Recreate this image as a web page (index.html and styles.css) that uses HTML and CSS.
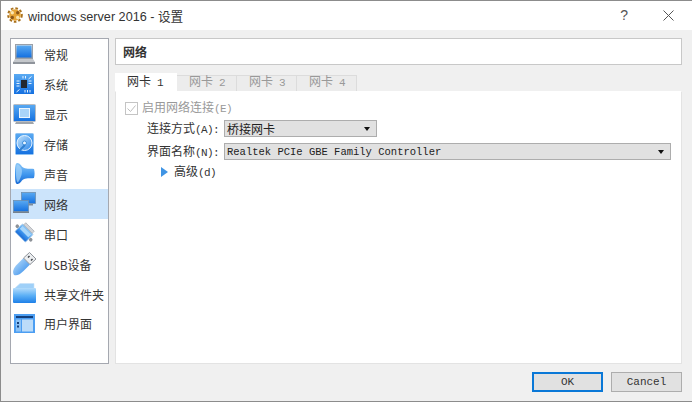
FILE: index.html
```html
<!DOCTYPE html>
<html lang="zh">
<head>
<meta charset="utf-8">
<title>windows server 2016 - 设置</title>
<link rel="stylesheet" href="styles.css">
</head>
<body>
<svg class="defs" width="0" height="0" aria-hidden="true">
  <defs>
    <linearGradient id="g" x1="0" y1="0" x2="0" y2="1"><stop offset="0" stop-color="#b4dcfb"/><stop offset=".5" stop-color="#5cb0f6"/><stop offset="1" stop-color="#1e80e8"/></linearGradient>
    <linearGradient id="d" x1="0" y1="0" x2="0" y2="1"><stop offset="0" stop-color="#5aaaf2"/><stop offset="1" stop-color="#1470e0"/></linearGradient>
    <linearGradient id="h" x1="0" y1="0" x2="1" y2="1"><stop offset="0" stop-color="#c4e4fc"/><stop offset="1" stop-color="#2a86ea"/></linearGradient>
    <linearGradient id="s" x1="0" y1="0" x2="0" y2="1"><stop offset="0" stop-color="#e4e6e8"/><stop offset="1" stop-color="#8f949a"/></linearGradient>
    <linearGradient id="c" x1="0" y1="0" x2="0" y2="1"><stop offset="0" stop-color="#8cc8f8"/><stop offset=".55" stop-color="#3f96ee"/><stop offset="1" stop-color="#1668d4"/></linearGradient>
  </defs>
</svg>
<div class="window">
  <header class="titlebar">
    <svg class="app-icon" width="16" height="16" viewBox="0 0 16 16"><circle cx="8" cy="8" r="6.800" fill="none" stroke="#a8701c" stroke-width="2" stroke-dasharray="2.600 2"/><circle cx="8" cy="8" r="5.800" fill="#e6a436"/><circle cx="5.300" cy="5.800" r="1.700" fill="#fbe6b0"/><circle cx="10.700" cy="5.800" r="1.700" fill="#8a5518"/><circle cx="10.700" cy="10.500" r="1.700" fill="#fbe6b0"/><circle cx="5.300" cy="10.500" r="1.700" fill="#8a5518"/></svg>
    <span class="title">windows server 2016 - 设置</span>
    <span class="help">?</span>
    <svg class="close" width="11" height="11" viewBox="0 0 11 11"><path d="M.5.5l10 10M10.500.5l-10 10" stroke="#555" stroke-width="1" fill="none"/></svg>
  </header>
  <div class="content">
    <div class="main">
      <nav class="sidebar">
        <div class="nav-item"><svg class="ico" viewBox="0 0 26 24"><rect x="3.500" y="1.500" width="17" height="14" fill="url(#s)" stroke="#9aa0a8"/><rect x="4.500" y="2.500" width="15" height="12" fill="url(#d)"/><path d="M3 16h18l2 3H1z" fill="#c4c7cb"/><rect x="1" y="19" width="22" height="2" fill="#8f949b"/></svg><span>常规</span></div>
        <div class="nav-item"><svg class="ico" viewBox="0 0 26 24"><rect x="2" y="1" width="20" height="20" fill="url(#d)"/><rect x="9" y="7" width="6" height="8" fill="#23272e"/><path d="M11 3v2.500M13.500 3v2.500M4.500 8h3M4.500 10.500h3M4.500 13h3M16.500 8h3M16.500 10.500h3M13 17v2.500M15.500 17v2.500M18 17v2.500M4.500 19l3-2.500M16.500 6l3-2.500" stroke="#e6f3ff" stroke-width="1" fill="none"/></svg><span>系统</span></div>
        <div class="nav-item"><svg class="ico" viewBox="0 0 26 24"><rect x="1.500" y="1.500" width="22" height="17" rx="1" fill="url(#d)" stroke="#b8bcc2"/><rect x="7.500" y="5.500" width="10" height="9" fill="#a9d4f9" stroke="#eaf5ff"/><path d="M4 19h17l1 2H3z" fill="#a0a5ab"/></svg><span>显示</span></div>
        <div class="nav-item"><svg class="ico" viewBox="0 0 26 24"><rect x="3.500" y=".5" width="18" height="21" rx="1" fill="url(#d)" stroke="#8fc2f2"/><circle cx="12.500" cy="10" r="7.500" fill="url(#h)" stroke="#eaf5ff"/><circle cx="12.500" cy="10" r="2" fill="#eaf5ff" stroke="#3f8fdc"/><path d="M7 18l6-6" stroke="#2f7fd0" stroke-width="2"/></svg><span>存储</span></div>
        <div class="nav-item"><svg class="ico" viewBox="0 0 26 24"><path d="M5 0c3 0 4 2.500 5.500 4 3 2.500 7.500 1.500 11.500 2 .8 3 .8 6 0 9-4 .5-8.500-.5-11.500 2C9 18.500 8 21 5 21c-1.500 0-2-4-2-10.500S3.500 0 5 0z" fill="url(#c)"/><path d="M5 1.500c2 0 3 2 4.500 4C11 9 9 15 6 19.500c-1 0-2-4-2-9s.5-9 1-9z" fill="#a5d4f9" opacity=".7"/></svg><span>声音</span></div>
        <div class="nav-item active"><svg class="ico" viewBox="0 0 26 24"><rect x="9.500" y=".5" width="14" height="11" fill="url(#d)" stroke="#6d8fb0" stroke-width=".8"/><path d="M12 12h9v1.500h-9z" fill="#7f8c9a"/><rect x="1.500" y="8.500" width="15" height="11" fill="url(#d)" stroke="#6d8fb0" stroke-width=".8"/><path d="M1 19.500h16V21H1z" fill="#76828e"/></svg><span>网络</span></div>
        <div class="nav-item"><svg class="ico" viewBox="0 0 26 24"><g transform="rotate(45 12 11)"><rect x="4.500" y="5.500" width="15" height="11" rx="1" fill="url(#c)" stroke="#9ec6ea" stroke-width=".8"/><rect x="6" y="7" width="12" height="4" fill="#a8d6fa"/><rect x="6" y="2.500" width="12" height="3" fill="#d2d4d8" stroke="#9a9ea4" stroke-width=".6"/><circle cx="2.500" cy="11" r="1.800" fill="#8d9298"/><circle cx="21.500" cy="11" r="1.800" fill="#8d9298"/></g></svg><span>串口</span></div>
        <div class="nav-item"><svg class="ico" viewBox="0 0 26 24"><path d="M2 23c-2-3-.5-7 3-10.500l6.500-6.500 6.500 6.500-6.500 6.500C8 22.500 5 24 2 23z" fill="url(#h)"/><path d="M11.500 6l6-5.500 6.500 6.500-6 5.500z" fill="#eceef0" stroke="#8d9299"/><path d="M15.500 5l1.500-1.500 1 1L16.500 6zM18.500 8l1.500-1.500 1 1L19.500 9z" fill="#3c4046"/></svg><span>USB设备</span></div>
        <div class="nav-item"><svg class="ico" viewBox="0 0 26 24"><path d="M2 7l6-5.500h14V8H2z" fill="#9fd0f8" stroke="#c6e0f8" stroke-width=".6"/><rect x="1" y="6" width="23" height="15" rx="1" fill="url(#g)"/></svg><span>共享文件夹</span></div>
        <div class="nav-item"><svg class="ico" viewBox="0 0 26 24"><rect x="2" y="2" width="21" height="19" fill="#4c9ef2"/><rect x="4" y="4" width="17" height="2" fill="#133f7c"/><rect x="10" y="7.500" width="11" height="12" fill="#bcdcf9"/><rect x="4" y="7.500" width="5" height="12" fill="#8cc2f5"/><rect x="5" y="10" width="2" height="2" fill="#133f7c"/><rect x="5" y="13.500" width="2" height="2" fill="#133f7c"/></svg><span>用户界面</span></div>
      </nav>
      <section class="panel">
        <h1 class="heading">网络</h1>
        <div class="tabs">
          <span class="tab tab-on">网卡<span class="l"> 1</span></span>
          <span class="tab">网卡<span class="l"> 2</span></span>
          <span class="tab">网卡<span class="l"> 3</span></span>
          <span class="tab">网卡<span class="l"> 4</span></span>
        </div>
        <div class="tab-body">
          <label class="check-row"><svg class="check" width="13" height="13" viewBox="0 0 13 13"><rect x=".5" y=".5" width="12" height="12" fill="#fff" stroke="#c4c4c4"/><path d="M2.500 6.500l3 3 5-6" stroke="#bdbdbd" fill="none"/></svg><span class="check-text">启用网络连接<span class="l">(E)</span></span></label>
          <div class="field">
            <span class="field-label">连接方式<span class="l">(A):</span></span>
            <div class="select select-short"><span>桥接网卡</span><i class="caret"></i></div>
          </div>
          <div class="field">
            <span class="field-label">界面名称<span class="l">(N):</span></span>
            <div class="select select-long"><span class="mono">Realtek PCIe GBE Family Controller</span><i class="caret"></i></div>
          </div>
          <div class="advanced"><i class="arrow"></i><span class="adv-text">高级<span class="l">(d)</span></span></div>
        </div>
      </section>
    </div>
    <footer class="buttons">
      <button class="btn btn-default">OK</button>
      <button class="btn">Cancel</button>
    </footer>
  </div>
</div>
</body>
</html>
```
FILE: styles.css
```css
* { box-sizing: border-box; }
html, body { margin: 0; padding: 0; width: 692px; height: 402px; overflow: hidden; }
body { font-family: "Liberation Mono", "Noto Sans CJK SC", monospace; font-size: 12px; color: #333; }
.defs { position: absolute; }
.l { font-size: 11px; letter-spacing: -.6px; }
.mono { font-size: 10.500px; }
.window { width: 692px; height: 402px; display: flex; flex-direction: column; background: #f0f0f0; border-top: 1px solid #8c8c8c; border-left: 1px solid #8c8c8c; border-bottom: 1px solid #8c8c8c; }
.titlebar { height: 29px; flex: none; display: flex; align-items: center; background: #fff; padding: 0 18px 1px 6px; }
.app-icon { flex: none; }
.title { margin-left: 5px; font-family: "Liberation Sans", "Noto Sans CJK SC", sans-serif; font-size: 12.650px; color: #333; flex: 1; }
.help { font-family: "Liberation Sans", sans-serif; font-size: 14px; color: #555; margin-right: 35px; }
.content { flex: 1; display: flex; flex-direction: column; padding: 8px 10px 0 9px; min-height: 0; }
.main { display: flex; gap: 6px; height: 326px; flex: none; }
.sidebar { width: 99px; flex: none; background: #fff; border: 1px solid #a5a8b0; padding-top: 1px; }
.nav-item { height: 29.900px; display: flex; align-items: center; padding-left: 1px; font-family: "Noto Sans CJK SC", sans-serif; font-size: 12px; color: #333; }
.nav-item.active { background: #cce4fb; }
.ico { width: 26px; height: 24px; flex: none; margin-right: 6px; }
.panel { flex: 1; display: flex; flex-direction: column; min-width: 0; }
.heading { margin: 0; height: 27px; flex: none; display: flex; align-items: center; padding-left: 7px; background: #fff; border: 1px solid #c8c8c8; font-family: "Noto Sans CJK SC", sans-serif; font-size: 12px; font-weight: 700; color: #333; }
.tabs { display: flex; margin-top: 8px; height: 18px; flex: none; align-items: flex-end; }
.tab { height: 16px; padding: 0 11px 0 12px; background: #ececec; border: 1px solid #dcdcdc; border-left: 0; border-bottom: 0; color: #999; line-height: 14px; }
.tab-on { height: 18px; padding: 1px 14px 0 12px; background: #fff; border: 0; color: #333; line-height: 18px; }
.tab-body { flex: 1; background: #fff; border: 1px solid #e3e3e3; border-top-color: #fff; padding: 8px 9px 0 9px; }
.check-row { display: flex; align-items: center; gap: 4px; height: 17px; color: #999; }
.check { flex: none; }
.check-text { padding-bottom: 3px; }
.field { display: flex; align-items: center; height: 17px; margin-top: 3px; margin-left: 22px; }
.field + .field { margin-top: 6px; }
.field-label { width: 77px; flex: none; padding-bottom: 2px; color: #333; white-space: nowrap; }
.select { height: 17px; background: #e1e1e1; border: 1px solid #adadad; display: flex; align-items: center; justify-content: space-between; padding: 0 6px 0 2px; color: #222; }
.select-short { width: 153px; }
.select-long { width: 447px; }
.caret { width: 0; height: 0; border-left: 3.500px solid transparent; border-right: 3.500px solid transparent; border-top: 4px solid #111; }
.advanced { display: flex; align-items: center; gap: 6px; margin: 3px 0 0 36px; height: 18px; color: #333; }
.adv-text { padding-bottom: 2px; }
.arrow { width: 0; height: 0; border-top: 5px solid transparent; border-bottom: 5px solid transparent; border-left: 7px solid #3f94e4; }
.buttons { display: flex; justify-content: flex-end; gap: 8px; padding: 8px 0 0 0; }
.btn { width: 71px; height: 20px; background: #e1e1e1; border: 1px solid #adadad; font-family: "Liberation Mono", monospace; font-size: 11px; color: #333; padding: 0; }
.btn-default { border: 2px solid #0a78d7; }
```
